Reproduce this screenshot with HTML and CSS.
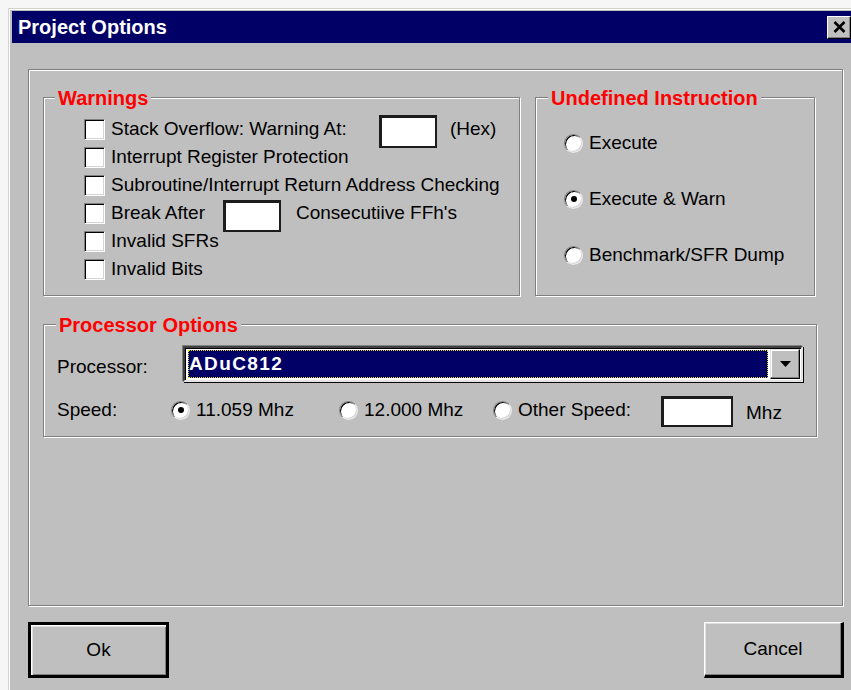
FILE: index.html
```html
<!DOCTYPE html>
<html lang="en">
<head>
<meta charset="utf-8">
<title>Project Options</title>
<link rel="stylesheet" href="styles.css">
</head>
<body>
<div class="window">
  <div class="titlebar">
    <span class="title">Project Options</span>
    <button class="close-btn" type="button" aria-label="Close">
      <svg width="13" height="12" viewBox="0 0 13 12"><path d="M1.5 1 L11.5 11 M11.5 1 L1.5 11" stroke="#000" stroke-width="2.6" fill="none"/></svg>
    </button>
  </div>

  <div class="frame">
    <div class="top-row">
      <section class="group warnings">
        <h2 class="group-title">Warnings</h2>
        <div class="warnings-body">
          <div class="row">
            <span class="check"></span>
            <span class="label stack-label">Stack Overflow: Warning At:</span>
            <span class="field hex-field"></span>
            <span class="after-field">(Hex)</span>
          </div>
          <div class="row">
            <span class="check"></span>
            <span class="label">Interrupt Register Protection</span>
          </div>
          <div class="row">
            <span class="check"></span>
            <span class="label">Subroutine/Interrupt Return Address Checking</span>
          </div>
          <div class="row">
            <span class="check"></span>
            <span class="label break-label">Break After</span>
            <span class="field break-field"></span>
            <span class="after-field consec">Consecutiive FFh's</span>
          </div>
          <div class="row">
            <span class="check"></span>
            <span class="label">Invalid SFRs</span>
          </div>
          <div class="row">
            <span class="check"></span>
            <span class="label">Invalid Bits</span>
          </div>
        </div>
      </section>

      <section class="group undefined">
        <h2 class="group-title">Undefined Instruction</h2>
        <div class="undefined-body">
          <div class="row">
            <span class="radio"></span>
            <span class="radio-label">Execute</span>
          </div>
          <div class="row">
            <span class="radio on"></span>
            <span class="radio-label">Execute &amp; Warn</span>
          </div>
          <div class="row">
            <span class="radio"></span>
            <span class="radio-label">Benchmark/SFR Dump</span>
          </div>
        </div>
      </section>
    </div>

    <section class="group processor">
      <h2 class="group-title">Processor Options</h2>
      <div class="processor-body">
        <div class="proc-row">
          <span class="proc-label">Processor:</span>
          <div class="combo">
            <div class="combo-value"><span>ADuC812</span></div>
            <div class="combo-btn">
              <svg width="11" height="6" viewBox="0 0 11 6"><path d="M0 0 H11 L5.5 6 Z" fill="#000"/></svg>
            </div>
          </div>
        </div>
        <div class="speed-row">
          <span class="speed-label">Speed:</span>
          <span class="speed-opt opt-1"><span class="radio on"></span><span class="radio-label">11.059 Mhz</span></span>
          <span class="speed-opt opt-2"><span class="radio"></span><span class="radio-label">12.000 Mhz</span></span>
          <span class="speed-opt opt-3"><span class="radio"></span><span class="radio-label">Other Speed:</span></span>
          <span class="field speed-field"></span>
          <span class="after-field mhz">Mhz</span>
        </div>
      </div>
    </section>
  </div>

  <div class="button-row">
    <button class="btn btn-default" type="button"><span>Ok</span></button>
    <button class="btn" type="button"><span>Cancel</span></button>
  </div>
</div>
</body>
</html>
```
FILE: styles.css
```css
html, body {
  margin: 0;
  padding: 0;
  background: #f6f6f6;
  overflow: hidden;
  width: 851px;
  height: 690px;
}

body {
  font-family: "Liberation Sans", Arial, sans-serif;
  font-size: 19px;
  color: #000;
}

/* dialog window */
.window {
  margin: 8px 0 0 8px;
  width: 880px;
  height: 700px;
  padding: 2px 0 0 3px;
  background: #bfbfbf;
  border-top: 1px solid #d2d2d2;
  border-left: 1px solid #d2d2d2;
  box-shadow: inset 1px 1px 0 #ffffff;
  box-sizing: border-box;
}

.titlebar {
  width: 845px;
  height: 32px;
  background: #000066;
  display: flex;
  align-items: center;
  padding-left: 6px;
  box-sizing: border-box;
}

.title {
  color: #fff;
  font-weight: bold;
  font-size: 20px;
  flex: 1;
}

.close-btn {
  width: 24px;
  height: 23px;
  margin-right: 6px;
  padding: 0;
  background: #bfbfbf;
  border: 1px solid;
  border-color: #fff #000 #000 #fff;
  box-shadow: inset -1px -1px 0 #808080;
  display: flex;
  align-items: center;
  justify-content: center;
}

/* etched frame */
.frame {
  margin: 26px 0 0 16px;
  width: 815px;
  height: 537px;
  padding: 27px 0 0 14px;
  box-sizing: border-box;
  border: 1px solid #808080;
  box-shadow: inset 1px 1px 0 #fff, 1px 1px 0 #fff;
}

.top-row {
  display: flex;
  gap: 15px;
}

.group {
  border: 1px solid #808080;
  box-shadow: inset 1px 1px 0 #fff, 1px 1px 0 #fff;
  box-sizing: border-box;
}

.group-title {
  margin: -12px 0 -12px 11px;
  padding: 0 3px;
  width: fit-content;
  height: 24px;
  line-height: 24px;
  background: #bfbfbf;
  color: #ff0000;
  font-size: 20px;
  font-weight: bold;
}

.warnings {
  width: 477px;
  height: 199px;
}

.undefined {
  width: 280px;
  height: 199px;
}

.undefined .group-title {
  margin-left: 12px;
}

.processor {
  margin-top: 28px;
  width: 774px;
  height: 113px;
}

.processor .group-title {
  margin-left: 12px;
}

.row {
  display: flex;
  align-items: center;
  height: 28px;
  white-space: nowrap;
}

.warnings-body {
  padding: 17px 0 0 40px;
}

.undefined-body {
  padding: 31px 0 0 28px;
  display: flex;
  flex-direction: column;
  gap: 28px;
}

/* checkbox: sunken square */
.check {
  width: 21px;
  height: 21px;
  flex: none;
  box-sizing: border-box;
  background: #fff;
  border: 1px solid;
  border-color: #808080 #fff #fff #808080;
  box-shadow: inset 1px 1px 0 #000, inset -1px -1px 0 #d4d4d4;
}

.label {
  margin-left: 6px;
}

.stack-label {
  width: 268px;
}

.break-label {
  width: 112px;
}

/* text entry boxes */
.field {
  flex: none;
  background: #fff;
  box-sizing: border-box;
  border: 2px solid #1c1c1c;
  border-top-width: 3px;
  border-left-width: 3px;
}

.hex-field {
  width: 58px;
  height: 33px;
  margin-top: 4px;
}

.break-field {
  width: 58px;
  height: 32px;
  margin-top: 6px;
}

.after-field {
  margin-left: 13px;
}

.consec {
  margin-left: 15px;
}

/* radio button */
.radio {
  width: 19px;
  height: 19px;
  flex: none;
  box-sizing: border-box;
  border-radius: 50%;
  background: #fff;
  border: 1px solid;
  border-color: #808080 #e8e8e8 #e8e8e8 #808080;
  box-shadow: inset 1px 1px 0 #000, inset -1px -1px 0 #d4d4d4;
  display: flex;
  align-items: center;
  justify-content: center;
}

.radio.on::after {
  content: "";
  width: 6px;
  height: 6px;
  border-radius: 50%;
  background: #000;
}

.radio-label {
  margin-left: 6px;
}

/* processor options */
.processor-body {
  padding: 21px 0 0 13px;
}

.proc-row {
  display: flex;
  align-items: center;
}

.proc-label {
  width: 126px;
  margin-top: 6px;
}

.combo {
  width: 620px;
  height: 36px;
  box-sizing: border-box;
  background: #fff;
  border: 2px solid;
  border-color: #404040 #e4e4e4 #e4e4e4 #404040;
  box-shadow: inset 1px 1px 0 #000, 1px 1px 0 #000, -1px -1px 0 #808080;
  display: flex;
  padding: 1px 1px 1px 3px;
}

.combo-value {
  flex: 1;
  background: #000066;
  outline: 1px dotted #f0e000;
  outline-offset: -1px;
  color: #fff;
  font-weight: bold;
  letter-spacing: 1.4px;
  display: flex;
  align-items: center;
  padding-left: 1px;
  margin: 1px 2px 1px 0;
}

.combo-btn {
  width: 30px;
  box-sizing: border-box;
  background: #bfbfbf;
  border: 1px solid;
  border-color: #e4e4e4 #000 #000 #e4e4e4;
  box-shadow: inset -1px -1px 0 #808080, inset 1px 1px 0 #fff;
  display: flex;
  align-items: center;
  justify-content: center;
}

.speed-row {
  display: flex;
  align-items: center;
  height: 32px;
  margin-top: 12px;
  white-space: nowrap;
}

.speed-label {
  width: 114px;
}

.speed-opt {
  display: flex;
  align-items: center;
}

.opt-1 { width: 168px; }
.opt-2 { width: 154px; }
.opt-3 { width: 168px; }

.speed-field {
  width: 72px;
  height: 31px;
  margin-top: 3px;
}

.mhz {
  margin-top: 6px;
}

/* dialog buttons */
.button-row {
  margin: 16px 0 0 16px;
  width: 816px;
  display: flex;
  justify-content: space-between;
}

.btn {
  width: 140px;
  height: 56px;
  padding: 0;
  box-sizing: border-box;
  background: #bfbfbf;
  font-family: inherit;
  font-size: 19px;
  color: #000;
  border: 1px solid;
  border-color: #fff #000 #000 #fff;
  border-right-width: 3px;
  border-bottom-width: 3px;
  box-shadow: inset -1px -1px 0 #808080, inset 1px 1px 0 #e0e0e0;
}

.btn-default {
  width: 141px;
  border: 3px solid #000;
  box-shadow: inset 1px 1px 0 #fff, inset 2px 2px 0 #e0e0e0, inset -1px -1px 0 #808080;
}
```
